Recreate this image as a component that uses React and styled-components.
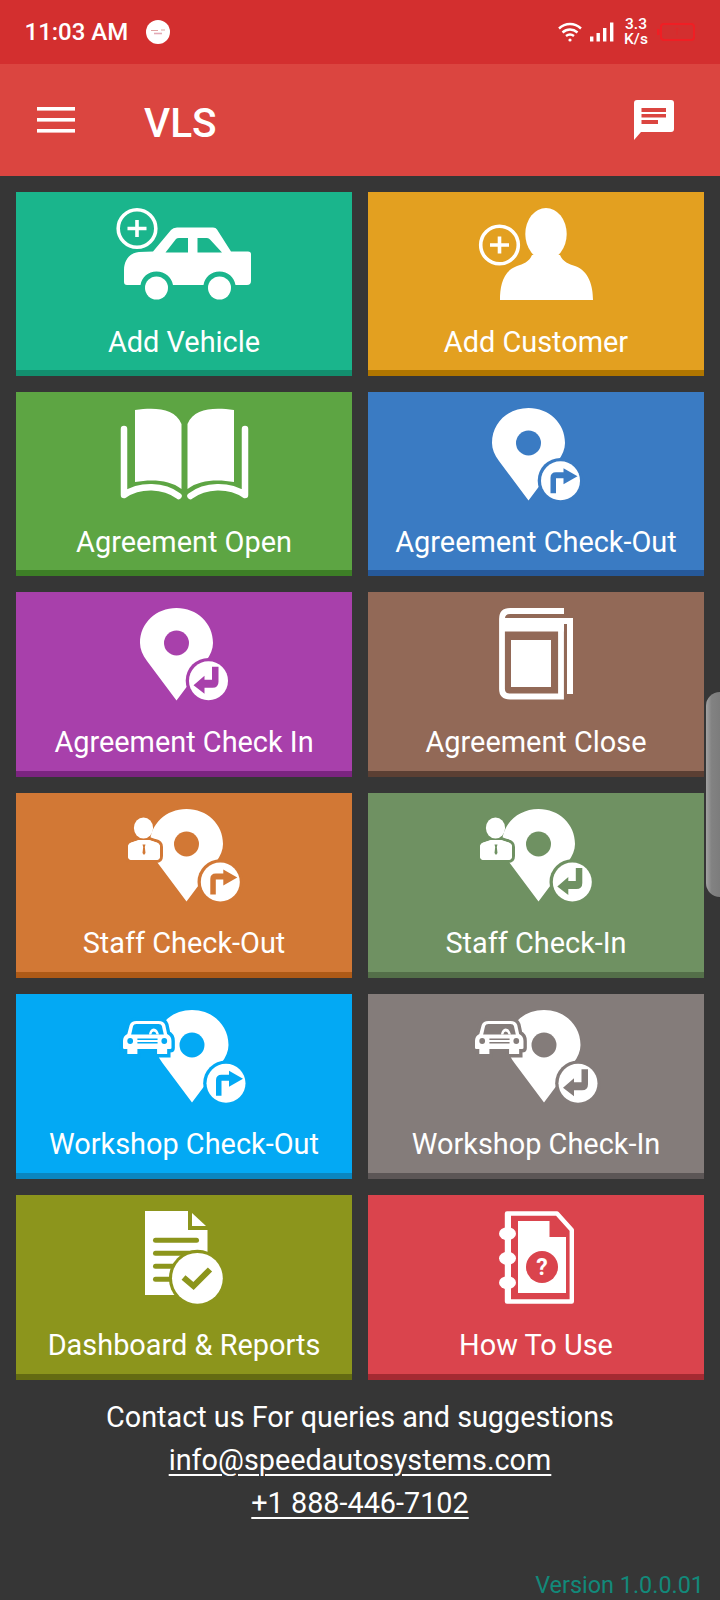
import React from 'react';
import styled, { createGlobalStyle } from 'styled-components';

const GlobalStyle = createGlobalStyle`
  html, body {
    margin: 0;
    padding: 0;
    background: #363636;
  }
  * {
    box-sizing: border-box;
  }
`;

const Screen = styled.div`
  position: relative;
  width: 720px;
  height: 1600px;
  overflow: hidden;
  background: #363636;
  color: #fff;
  font-family: Roboto, "Liberation Sans", sans-serif;
`;

const StatusBar = styled.div`
  display: flex;
  align-items: center;
  height: 64px;
  padding: 0 25px 0 24.5px;
  background: #d32f2f;
`;

const Clock = styled.span`
  font-size: 24px;
  font-weight: 500;
`;

const NoticeDot = styled.svg`
  margin-left: 18px;
`;

const StatusRight = styled.div`
  display: flex;
  align-items: center;
  margin-left: auto;
`;

const Speed = styled.div`
  display: flex;
  flex-direction: column;
  align-items: center;
  width: 24px;
  margin: 0 9px 0 10px;
  font-size: 15.5px;
  font-weight: 500;
  line-height: 15px;
`;

const AppBar = styled.header`
  display: flex;
  align-items: center;
  height: 112px;
  padding: 0 46px 0 37px;
  background: #db4540;
`;

const Title = styled.h1`
  margin: 6px 0 0 69px;
  font-size: 40.5px;
  font-weight: 500;
  line-height: 44px;
`;

const ChatButton = styled.svg`
  margin-left: auto;
`;

const Grid = styled.main`
  display: grid;
  grid-template-columns: 336px 336px;
  grid-template-rows: 184px 184px repeat(4, 185px);
  gap: 16px;
  padding: 16px;
`;

const Tile = styled.a`
  display: flex;
  flex-direction: column;
  align-items: center;
  padding-top: 16px;
  background: ${p => p.$bg};
  border-bottom: 6px solid ${p => p.$shade};
`;

const IconBox = styled.svg`
  display: block;
  flex: none;
  height: 92px;
  fill: #fff;
  overflow: visible;
`;

const TileLabel = styled.span`
  margin-top: 25px;
  font-size: 28.9px;
  line-height: 34px;
  white-space: nowrap;
`;

const Footer = styled.footer`
  text-align: center;
  font-size: 28.8px;
  line-height: 43px;
`;

const ContactLink = styled.a`
  display: block;
  color: #fff;
  text-decoration: underline;
  text-decoration-thickness: 2px;
  text-underline-offset: 4px;
`;

const Version = styled.div`
  margin-top: 44px;
  padding-right: 16px;
  text-align: right;
  color: #12897a;
  font-size: 23.4px;
  line-height: 32px;
`;

const EdgeHandle = styled.div`
  position: absolute;
  top: 692px;
  right: 0;
  width: 14px;
  height: 205px;
  border-radius: 20px 0 0 20px;
  background: linear-gradient(90deg, #a2a2a2, #828282 40%, #7c7c7c);
`;

const Pin = ({ x = 0, cut }) => (
  <g transform={`translate(${x} 0)`}>
    <path d="M36.5 92.5L7 53C2.5 47 0 41 0 35C0 15 16 0 36.5 0C57 0 73 15 73 35C73 41 70.5 47 66 53Z" />
    <ellipse cx="36.5" cy="35" rx="12.5" ry="12.5" fill={cut} />
  </g>
);

const Badge = ({ x, y, cut, out }) => (
  <g transform={`translate(${x} ${y})`}>
    <circle r="22.8" fill={cut} />
    <circle r="19.5" />
    {out ? (
      <path fill={cut} d="M-10 12.5V-3Q-10 -8.5 -4.5 -8.5H3V-12.5L17 -4.5L3 3.5V-2.5H-4.5V12.5Z" />
    ) : (
      <path fill={cut} d="M10 -14H3.5V-1H-4V-5L-15 4.5L-4 13V7H4Q10 7 10 1Z" />
    )}
  </g>
);

const PlusRing = ({ x, y }) => (
  <g transform={`translate(${x} ${y})`} fill="none" stroke="#fff">
    <circle r="18.8" strokeWidth="3.6" />
    <path d="M-9.5 0H9.5M0 -8.5V8.5" strokeWidth="3.6" />
  </g>
);

const CarIcon = ({ cut }) => (
  <IconBox width="134" viewBox="0 0 134 92">
    <PlusRing x={20} y={20.5} />
    <path d="M60 19.5H96Q99 19.5 100 21.5L114 43.5H131Q134 43.5 134 46V73Q134 77 130 77H118.5C117 69 111 63.5 102.5 63.5C94 63.5 88 69 86.5 77H56C54.5 69 48 63.5 39.5 63.5C31 63.5 25 69 23.5 77H10Q7 77 7 74V62C7 52 13 44.5 22 44L36 43.5L54 22Q56 19.5 60 19.5Z" />
    <path fill={cut} d="M48.5 44.5L59 31Q60 30 62 30H71V44.5ZM80.5 30H90Q92 30 93 31.5L105 44.5H80.5Z" />
    <circle cx="39.5" cy="80" r="11.5" />
    <circle cx="102.5" cy="80" r="11.5" />
  </IconBox>
);

const CustomerIcon = () => (
  <IconBox width="114" viewBox="0 0 114 92">
    <PlusRing x={20.5} y={37} />
    <ellipse cx="67" cy="26" rx="20.7" ry="26" />
    <path d="M21 92C21 78 24 63 38 58C44 56 50 54 53 47H81C84 54 90 56 96 58C110 63 114 78 114 92Z" />
  </IconBox>
);

const OpenBookIcon = () => (
  <IconBox width="129" viewBox="0 0 129 92">
    <path d="M15 2C35 -1 55 0 61.5 16V81C50 72 32 71 15 74Z" />
    <path d="M114 2C94 -1 74 0 67.5 16V81C79 72 97 71 114 74Z" />
    <path
      fill="none"
      stroke="#fff"
      strokeWidth="6.5"
      strokeLinecap="round"
      strokeLinejoin="round"
      d="M4 21V87C20 76 44 77 58.5 88M125 21V87C109 76 85 77 70.5 88"
    />
  </IconBox>
);

const PinOutIcon = ({ cut, out }) => (
  <IconBox width="88" viewBox="0 0 88 92">
    <Pin cut={cut} />
    <Badge x={68.5} y={72.7} cut={cut} out={out} />
  </IconBox>
);

const ClosedBookIcon = () => (
  <IconBox width="74" viewBox="0 0 74 92">
    <path
      fill="none"
      stroke="#fff"
      strokeWidth="5.8"
      d="M65 3H11Q3 3 3 11V81Q3 88.5 11 88.5H62V17"
    />
    <path d="M5 10H74V86H68V16H65V23.5H5Z" />
    <rect x="12" y="32" width="40" height="47" />
  </IconBox>
);

const StaffIcon = ({ cut, out }) => (
  <IconBox width="112" viewBox="0 0 112 92">
    <Pin x={22} cut={cut} />
    <Badge x={92.3} y={73} cut={cut} out={out} />
    <path
      stroke={cut}
      strokeWidth="6"
      paintOrder="stroke"
      d="M0 38Q0 34 5 33L11 31L21 31L27 33Q32 34 32 38V47Q32 51 28 51H4Q0 51 0 47Z"
    />
    <ellipse cx="15.5" cy="19" rx="9.6" ry="10.5" />
    <path d="M0 38Q0 34 5 33L11 31L16 36L21 31L27 33Q32 34 32 38V47Q32 51 28 51H4Q0 51 0 47Z" />
    <path fill={cut} d="M14.5 35.5H17.5L16.8 38L17.5 44L16 46L14.5 44L15.2 38Z" />
  </IconBox>
);

const WorkshopIcon = ({ cut, out }) => {
  const body = 'M7 15Q8.5 11 14 11H37Q42.5 11 44 15L46 24Q50.5 26 50.5 31V38Q50.5 39 49 39H46V44H35.5V39H15V44H4.5V39H1.5Q0 39 0 38V31Q0 26 4.5 24Z';
  return (
    <IconBox width="122" viewBox="0 0 122 92">
      <Pin x={32.5} cut={cut} />
      <Badge x={103} y={73.3} cut={cut} out={out} />
      <g transform="scale(0.96 1)">
        <path stroke={cut} strokeWidth="7" paintOrder="stroke" d={body} />
        <path fill={cut} d="M8.5 24.5L10.5 16Q11 14 14 14H37Q40 14 40.5 16L42.5 24.5Z" />
        <path d="M27 24.5Q28 19 32 18.5Q36 18.5 37.5 24.5H35Q34 21.5 32 21.5Q30 21.5 29.5 24.5Z" />
        <circle cx="7.5" cy="31" r="3" fill={cut} />
        <circle cx="43" cy="31" r="3" fill={cut} />
        <path fill={cut} d="M15 28.5H36V30H15ZM15 32H36V33.5H15Z" />
      </g>
    </IconBox>
  );
};

const ReportIcon = ({ cut }) => (
  <IconBox width="78" viewBox="0 0 78 92">
    <path d="M0 0H43V19H62.5V84H0Z" />
    <path d="M47 2L61 15H47Z" />
    {[29.3, 42.3, 55.3, 68.3].map(y => (
      <rect key={y} x="8" y={y - 2.5} width="46" height="5" rx="2.5" fill={cut} />
    ))}
    <circle cx="52.4" cy="67.3" r="28.5" fill={cut} />
    <circle cx="52.4" cy="67.3" r="25.4" />
    <path
      fill="none"
      stroke={cut}
      strokeWidth="6"
      d="M38.5 66.5L48.5 75L65 58.5"
    />
  </IconBox>
);

const HelpIcon = ({ cut }) => (
  <IconBox width="75" viewBox="0 0 75 92">
    <path
      fill="none"
      stroke="#fff"
      strokeWidth="4.4"
      strokeLinejoin="round"
      d="M8 2.5H58L72.8 19V90.5H8Z"
    />
    <rect x="6" y="2" width="6" height="89" />
    <path d="M19 10H50.5V26H67V82H19Z" />
    {[22.7, 47.3, 71.7].map(y => (
      <ellipse key={y} cx="8.5" cy={y} rx="8.5" ry="6.5" />
    ))}
    <circle cx="43" cy="56" r="16" fill={cut} />
    <text x="43" y="64" textAnchor="middle" fontSize="23" fontWeight="700" fontFamily="Roboto, sans-serif">?</text>
  </IconBox>
);

const tiles = [
  { label: 'Add Vehicle', bg: '#1ab58c', shade: '#128f6e', Icon: CarIcon },
  { label: 'Add Customer', bg: '#e3a020', shade: '#b07600', Icon: CustomerIcon },
  { label: 'Agreement Open', bg: '#5da543', shade: '#3d7f26', Icon: OpenBookIcon },
  { label: 'Agreement Check-Out', bg: '#3a7bc3', shade: '#26599a', Icon: PinOutIcon, out: true },
  { label: 'Agreement Check In', bg: '#a840ab', shade: '#7b2480', Icon: PinOutIcon },
  { label: 'Agreement Close', bg: '#926957', shade: '#5b3f33', Icon: ClosedBookIcon },
  { label: 'Staff Check-Out', bg: '#d27835', shade: '#ae5a17', Icon: StaffIcon, out: true },
  { label: 'Staff Check-In', bg: '#6f9162', shade: '#546f49', Icon: StaffIcon },
  { label: 'Workshop Check-Out', bg: '#03a9f4', shade: '#0a86c0', Icon: WorkshopIcon, out: true },
  { label: 'Workshop Check-In', bg: '#847c7a', shade: '#5c5656', Icon: WorkshopIcon },
  { label: 'Dashboard & Reports', bg: '#8c951c', shade: '#646b12', Icon: ReportIcon },
  { label: 'How To Use', bg: '#da444d', shade: '#a42a32', Icon: HelpIcon },
];

const App = () => (
  <Screen>
    <GlobalStyle />
    <StatusBar>
      <Clock>11:03 AM</Clock>
      <NoticeDot width="24" height="24" viewBox="0 0 24 24">
        <circle cx="12" cy="12" r="12" fill="#fff" />
        <path d="M5 10.5H12M15 10H19" stroke="#e0a3a3" strokeWidth="1.2" />
        <path d="M8 13.5H16" stroke="#e3aab6" strokeWidth="1.6" />
      </NoticeDot>
      <StatusRight>
        <svg width="24" height="20" viewBox="0 0 24 20" fill="none" stroke="#fff" strokeWidth="2.4">
          <path d="M1 6.5C7.5 0.5 16.5 0.5 23 6.5" />
          <path d="M4.5 10.5C9 6.5 15 6.5 19.5 10.5" />
          <path d="M8 14C10.5 12 13.5 12 16 14" />
          <circle cx="12" cy="18" r="1.6" fill="#fff" stroke="none" />
        </svg>
        <svg width="24" height="20" viewBox="0 0 24 20" fill="#fff" style={{ marginLeft: 8 }}>
          <rect x="0" y="14.5" width="3.4" height="5" />
          <rect x="6.5" y="11" width="3.4" height="8.5" />
          <rect x="13" y="6" width="3.4" height="13.5" />
          <rect x="20" y="0.5" width="3.4" height="19" />
        </svg>
        <Speed>
          <span>3.3</span>
          <span>K/s</span>
        </Speed>
        <svg width="38" height="18" viewBox="0 0 38 18" fill="none" stroke="#f01e24" strokeWidth="2">
          <rect x="4" y="1" width="33" height="16" rx="3" />
          <rect x="0" y="6" width="2.5" height="6" fill="#f01e24" stroke="none" />
          <path d="M20 5V12M17.5 7L20 5L22.5 7" strokeWidth="1" opacity="0.4" />
        </svg>
      </StatusRight>
    </StatusBar>

    <AppBar>
      <svg width="38" height="26" viewBox="0 0 38 26" fill="#fff">
        <rect y="0" width="38" height="3.6" />
        <rect y="11" width="38" height="3.6" />
        <rect y="22" width="38" height="3.6" />
      </svg>
      <Title>VLS</Title>
      <ChatButton width="40" height="40" viewBox="0 0 40 40">
        <path fill="#fff" d="M3 0H37Q40 0 40 3V29Q40 32 37 32H7L0 40V3Q0 0 3 0Z" />
        <path fill="#db4540" d="M7.5 8H32V12H7.5ZM7.5 14H32V17.5H7.5ZM7.5 20H24V24H7.5Z" />
      </ChatButton>
    </AppBar>

    <Grid>
      {tiles.map(({ label, bg, shade, Icon, out }) => (
        <Tile key={label} $bg={bg} $shade={shade}>
          <Icon cut={bg} out={out} />
          <TileLabel>{label}</TileLabel>
        </Tile>
      ))}
    </Grid>

    <Footer>
      <div>Contact us For queries and suggestions</div>
      <ContactLink>info@speedautosystems.com</ContactLink>
      <ContactLink>+1 888-446-7102</ContactLink>
      <Version>Version 1.0.0.01</Version>
    </Footer>

    <EdgeHandle />
  </Screen>
);

export default App;
